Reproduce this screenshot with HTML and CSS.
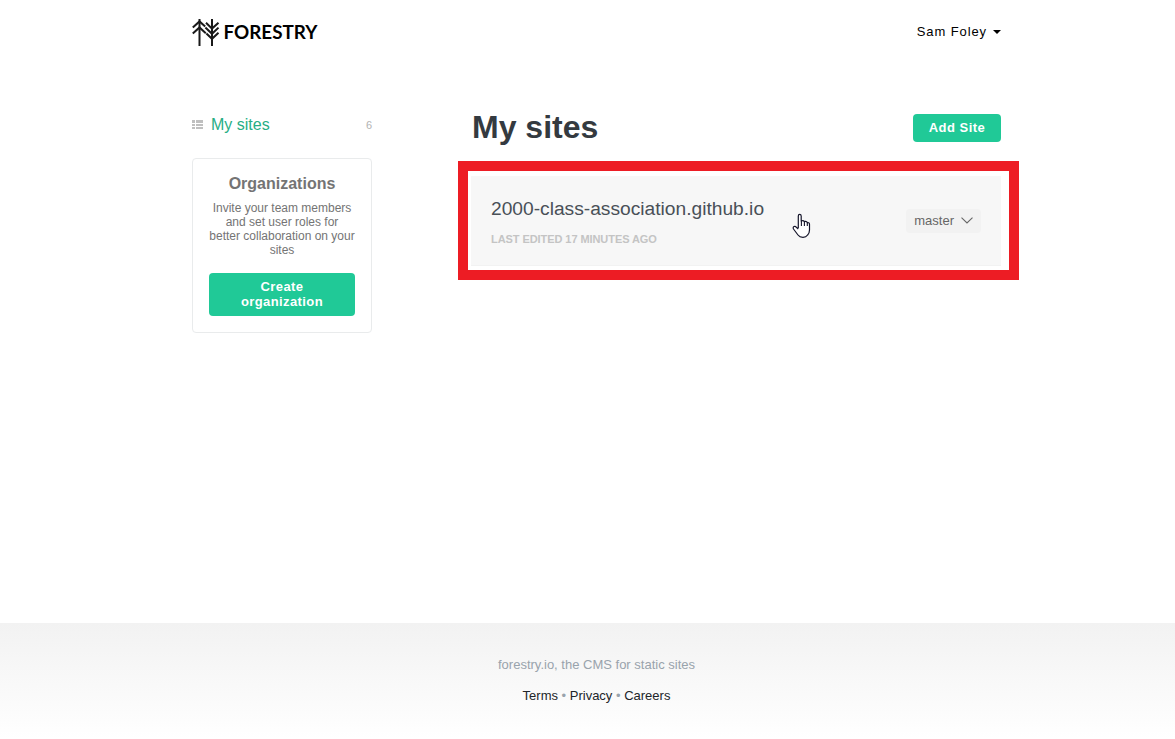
FILE: index.html
```html
<!DOCTYPE html>
<html lang="en">
<head>
<meta charset="utf-8">
<title>My sites</title>
<link rel="stylesheet" href="styles.css">
</head>
<body>
<div class="page">
  <header class="topbar">
    <svg class="logo" width="128" height="30" viewBox="0 0 128 30">
      <g fill="none" stroke="#191919" stroke-width="2">
        <path d="M7.5 2V29M20 2V29"/>
        <path d="M.8 10.6 7.5 4.4 13.2 9.6M.8 16.6 7.5 10.4 13.8 16.2"/>
        <path d="M14 5.8 20 11.6 26.5 5.8M13.4 10.6 20 16.8 26.5 10.6M14.4 16.6 20 21.8 26.5 15.8"/>
      </g>
      <text class="logo-text" x="31.5" y="22.3" textLength="94" lengthAdjust="spacingAndGlyphs">FORESTRY</text>
    </svg>
    <div class="user">Sam Foley<span class="caret"></span></div>
  </header>
  <div class="columns">
    <aside class="sidebar">
      <div class="nav">
        <svg width="11" height="10" viewBox="0 0 11 10" fill="#bfbfbf"><path d="M0 0H3V3H0ZM4 0H11V3H4ZM0 4H3V6H0ZM4 4H11V6H4ZM0 7H3V9H0ZM4 7H11V9H4Z"/></svg>
        <span class="nav-label">My sites</span>
        <span class="count">6</span>
      </div>
      <section class="org">
        <h2>Organizations</h2>
        <p>Invite your team members and set user roles for better collaboration on your sites</p>
        <div class="button org-button">Create organization</div>
      </section>
    </aside>
    <main class="main">
      <div class="heading"><h1>My sites</h1><div class="button">Add Site</div></div>
      <div class="highlight">
        <div class="site">
          <div>
            <div class="site-name">2000-class-association.github.io</div>
            <div class="edited">LAST EDITED 17 MINUTES AGO</div>
          </div>
          <div class="branch">master<svg width="12" height="7" viewBox="0 0 12 7" fill="none" stroke="#666" stroke-width="1.1"><path d="M.5 .7 6 6 11.5 .7"/></svg></div>
        </div>
      </div>
    </main>
  </div>
</div>
<footer class="footer">
  <p>forestry.io, the CMS for static sites</p>
  <div class="links">Terms <span>•</span> Privacy <span>•</span> Careers</div>
</footer>
<svg class="pointer" width="20" height="26" viewBox="0 0 20 26"><path d="M6.3 15V3Q6.3 1.4 7.7 1.4T9.2 3V8Q11.3 6.8 12.4 8.6 14.4 7.7 15.4 9.6 17.5 9.3 17.5 11.5V17Q17.5 20 15.6 22 14 24.3 11 24.3 7.6 24.3 6 22L1.5 16Q.7 14.2 2 13.5T4.3 14.2L6.3 16" fill="#fff" stroke="#15152a" stroke-width="1.2" stroke-linejoin="round"/><path d="M9.4 8V13M12.4 9V13M15.3 10V13" stroke="#15152a" stroke-width="1.1"/></svg>
</body>
</html>
```
FILE: styles.css
```css
* { box-sizing: border-box; }
body { margin: 0; height: 739px; overflow: hidden; display: flex; flex-direction: column; background: #fff; font-family: "Liberation Sans", Arial, sans-serif; }
h1, h2, p { margin: 0; }
.page { width: 809px; height: 623px; margin-left: 192px; }
.topbar { display: flex; justify-content: space-between; height: 102px; padding-top: 17px; }
.logo { display: block; }
.logo-text { font: bold 18px Lato, sans-serif; fill: #000; }
.user { display: flex; align-items: center; height: 29px; font-size: 13px; letter-spacing: .9px; color: #000; }
.caret { margin-left: 6px; border: 4px solid transparent; border-top-color: #000; border-bottom: 0; }
.columns { display: flex; justify-content: space-between; }
.sidebar { width: 180px; padding-top: 12px; }
.nav { display: flex; align-items: center; height: 22px; }
.nav-label { margin-left: 8px; font-size: 16px; color: #27ae84; }
.count { margin-left: auto; font-size: 11px; color: #b3b3b3; }
.org { height: 175px; margin-top: 22px; padding: 15px 16px; border: 1px solid #e9ebec; border-radius: 4px; text-align: center; color: #747474; }
.org h2 { font-size: 16px; line-height: 20px; }
.org p { margin-top: 7px; font-size: 12px; line-height: 14px; }
.button { width: 88px; height: 28px; border-radius: 4px; background: #20c997; color: #fff; font-size: 13px; font-weight: bold; line-height: 28px; letter-spacing: .5px; text-align: center; }
.org-button { width: auto; height: 43px; margin-top: 16px; padding: 6px 20px; line-height: 15px; letter-spacing: .4px; }
.main { width: 530px; }
.heading { display: flex; align-items: flex-start; justify-content: space-between; height: 59px; padding-top: 12px; }
.heading h1 { padding-left: 1px; font-size: 32px; line-height: 26px; color: #343a40; }
.highlight { width: 561px; height: 119px; margin-left: -13px; border: 10px solid #ed1c24; padding: 5px 8px 4px 3px; }
.site { display: flex; align-items: center; justify-content: space-between; height: 90px; padding: 0 20px; background: #f7f7f7; border-bottom: 1px solid #f2f2f2; }
.site-name { padding-top: 1px; font-size: 19.2px; line-height: 24px; color: #495057; }
.edited { margin-top: 11px; font-size: 11px; line-height: 14px; font-weight: bold; letter-spacing: -.07px; color: #c4c4c4; }
.branch { display: flex; align-items: center; gap: 7px; height: 24px; padding: 0 8px; border-radius: 4px; background: #f2f2f2; color: #666; font-size: 13px; }
.footer { height: 116px; padding: 34px 0 0 18px; background: linear-gradient(#f2f2f2, #fff); font-size: 13px; line-height: 16px; text-align: center; color: #99a3ac; }
.links { margin-top: 15px; color: #212529; }
.links span { color: #99a3ac; }
.pointer { position: absolute; left: 792px; top: 213px; }
```
